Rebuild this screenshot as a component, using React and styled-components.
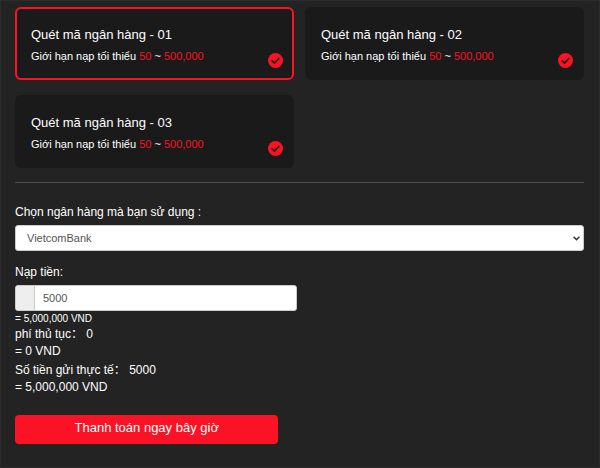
import React, { useState } from 'react';
import styled, { createGlobalStyle } from 'styled-components';

const GlobalStyle = createGlobalStyle`
  *, *::before, *::after { box-sizing: border-box; }
  body {
    margin: 0;
    background: #232323;
    color: #fff;
    font-family: "Liberation Sans", Arial, "Noto Sans CJK SC", sans-serif;
    font-size: 12px;
    line-height: 16px;
  }
`;

const Page = styled.main`
  min-height: 100vh;
  padding: 6px 15px 20px 14px;
  border: 1px solid #2c2c2c;
  background: #232323;
`;

const Channels = styled.div`
  display: grid;
  grid-template-columns: 1fr 1fr;
  gap: 15px 11px;
  padding-bottom: 14px;
  border-bottom: 1px solid #4c4c4c;
`;

const Channel = styled.button`
  display: flex;
  align-items: flex-end;
  justify-content: space-between;
  height: 73px;
  padding: 0 9px 10px 14px;
  border: 2px solid ${(p) => (p.$selected ? '#fb1224' : '#1a1a1a')};
  border-radius: 6px;
  background: #1a1a1a;
  color: #fff;
  font: inherit;
  text-align: left;
  cursor: pointer;
`;

const ChannelText = styled.span`
  display: flex;
  flex-direction: column;
  gap: 5px;
  padding-bottom: 4px;
`;

const ChannelName = styled.span`
  font-size: 13px;
`;

const ChannelLimit = styled.span`
  font-size: 11px;
`;

const Amount = styled.span`
  color: #fb1224;
`;

const Field = styled.div`
  display: flex;
  flex-direction: column;
  gap: 5px;
  margin-top: ${(p) => p.$top}px;
`;

const SelectBox = styled.div`
  display: grid;
  align-items: center;

  & > * {
    grid-area: 1 / 1;
  }
`;

const BankSelect = styled.select`
  appearance: none;
  width: 100%;
  height: 26px;
  padding: 0 20px 0 11px;
  border: 1px solid #ccc;
  border-radius: 3px;
  background: #fff;
  color: #555;
  font-family: inherit;
  font-size: 11px;
`;

const Chevron = styled.svg`
  justify-self: end;
  margin-right: 4px;
  pointer-events: none;
`;

const InputGroup = styled.div`
  display: flex;
  width: 49.5%;
  height: 26px;
  overflow: hidden;
  border: 1px solid #ccc;
  border-radius: 3px;
  background: #fff;
`;

const Addon = styled.span`
  width: 19px;
  border-right: 1px solid #ccc;
  background: #eee;
`;

const AmountInput = styled.input`
  flex: 1;
  min-width: 0;
  padding: 0 8px;
  border: 0;
  background: #fff;
  color: #555;
  font-family: inherit;
  font-size: 11px;
`;

const Converted = styled.div`
  margin-top: 1px;
  font-size: 10px;
  line-height: 14px;
`;

const Summary = styled.div`
  margin-bottom: 2px;
`;

const Line = styled.div`
  display: flex;
  height: 17px;
`;

const PayButton = styled.button`
  display: block;
  width: 46.3%;
  height: 29px;
  margin-top: 19px;
  padding: 0 0 4px;
  border: 0;
  border-radius: 4px;
  background: #fb1224;
  color: #fff;
  font-family: inherit;
  font-size: 13px;
  cursor: pointer;
`;

function CheckIcon() {
  return (
    <svg width="15" height="15" viewBox="0 0 15 15" aria-hidden="true">
      <circle cx="7.5" cy="7.5" r="7.5" fill="#fb1224" />
      <path d="M3.6 7.4 6.4 10 11.3 5" fill="none" stroke="#1a1a1a" strokeWidth="1.7" />
    </svg>
  );
}

const channels = ['01', '02', '03'];

export default function App() {
  const [selected, setSelected] = useState('01');
  const [amount, setAmount] = useState('5000');
  const total = (Number(amount) * 1000).toLocaleString('en-US');

  return (
    <>
      <GlobalStyle />
      <Page>
        <Channels>
          {channels.map((id) => (
            <Channel
              key={id}
              type="button"
              $selected={id === selected}
              aria-pressed={id === selected}
              onClick={() => setSelected(id)}
            >
              <ChannelText>
                <ChannelName>Quét mã ngân hàng - {id}</ChannelName>
                <ChannelLimit>
                  Giới hạn nạp tối thiểu <Amount>50</Amount> ~ <Amount>500,000</Amount>
                </ChannelLimit>
              </ChannelText>
              <CheckIcon />
            </Channel>
          ))}
        </Channels>

        <Field $top={21}>
          <label htmlFor="bank">Chọn ngân hàng mà bạn sử dụng :</label>
          <SelectBox>
            <BankSelect id="bank" defaultValue="VietcomBank">
              <option>VietcomBank</option>
            </BankSelect>
            <Chevron width="7" height="5" viewBox="0 0 7 5" aria-hidden="true">
              <path d="M0.6 0.8 3.5 3.7 6.4 0.8" fill="none" stroke="#333" strokeWidth="1.6" />
            </Chevron>
          </SelectBox>
        </Field>

        <Field $top={13}>
          <label htmlFor="amount">Nạp tiền:</label>
          <InputGroup>
            <Addon />
            <AmountInput id="amount" value={amount} onChange={(e) => setAmount(e.target.value)} />
          </InputGroup>
        </Field>

        <Converted>= {total} VND</Converted>
        <Summary>
          <Line>phí thủ tục：&nbsp;0</Line>
          <Line>= 0 VND</Line>
        </Summary>
        <Summary>
          <Line>Số tiền gửi thực tế：&nbsp;{amount}</Line>
          <Line>= {total} VND</Line>
        </Summary>

        <PayButton type="button">Thanh toán ngay bây giờ</PayButton>
      </Page>
    </>
  );
}
